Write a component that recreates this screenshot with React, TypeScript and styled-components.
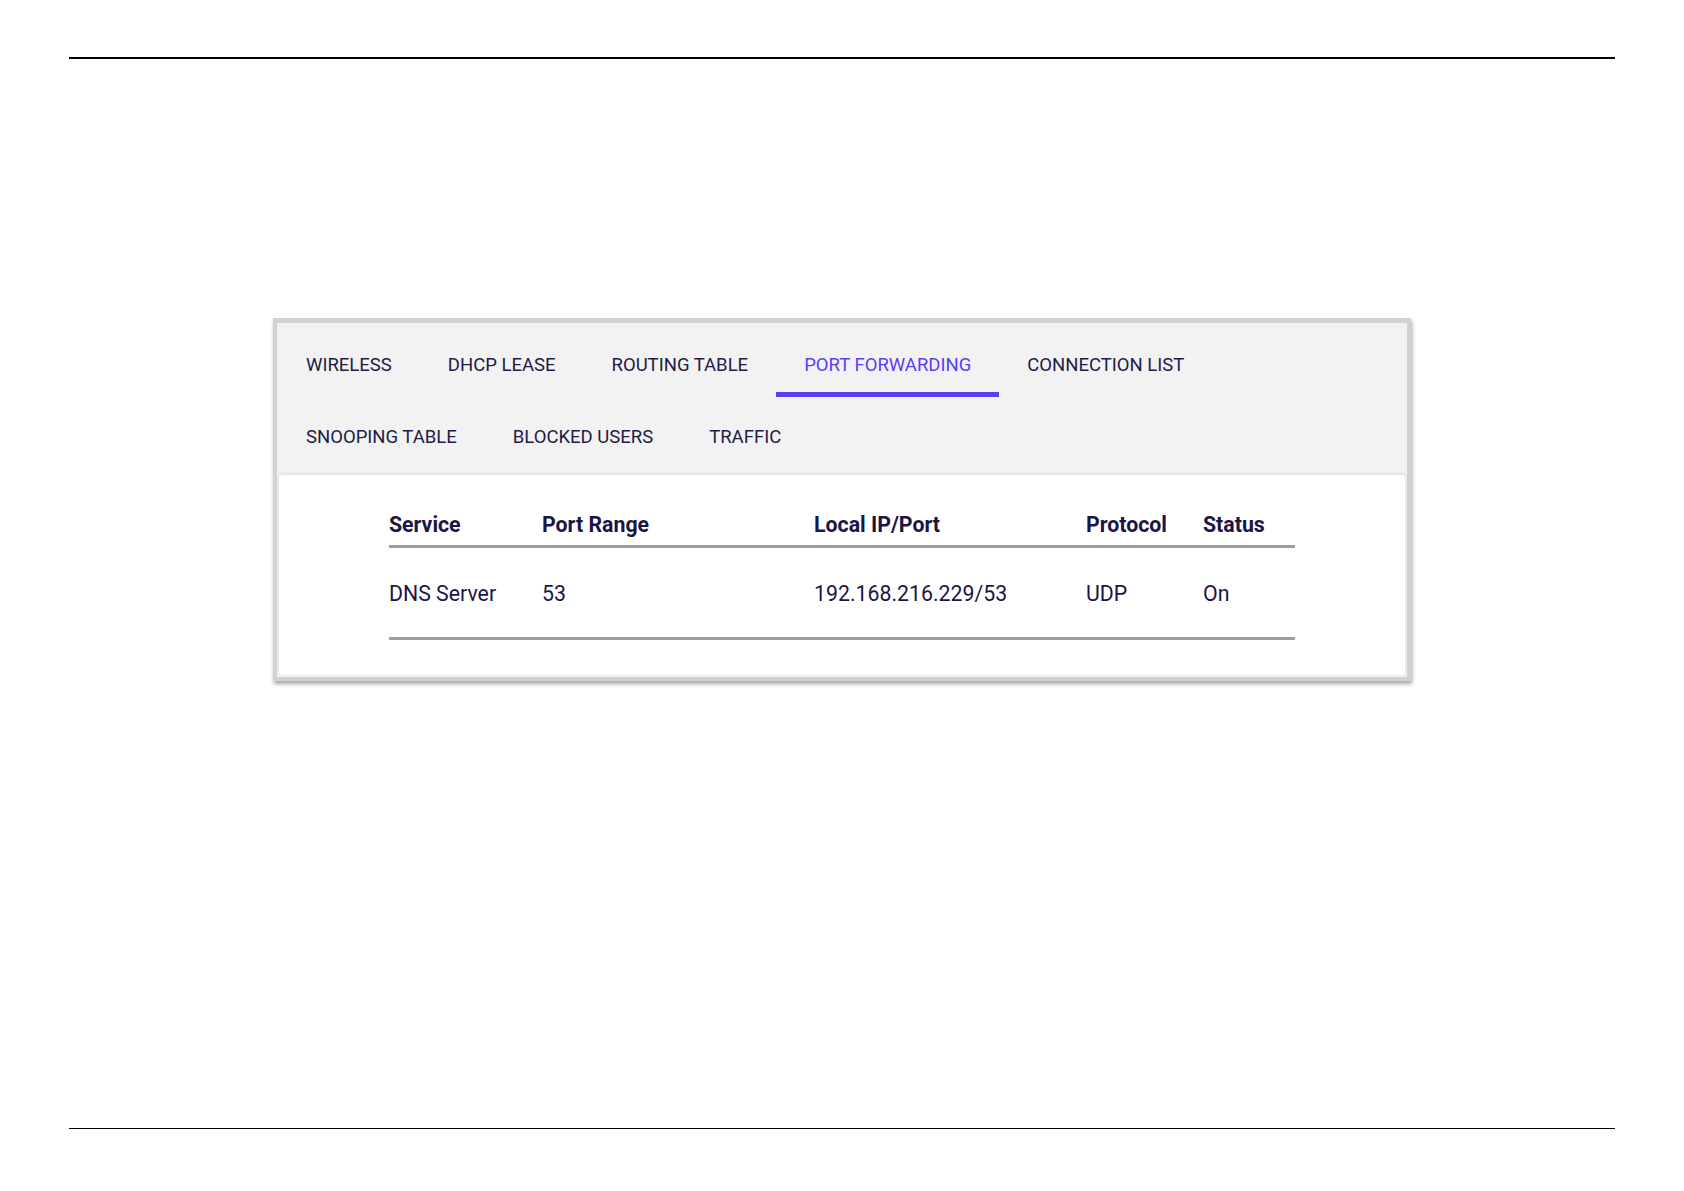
import React from "react";
import styled, { createGlobalStyle } from "styled-components";

const GlobalStyle = createGlobalStyle`
  html, body {
    margin: 0;
    padding: 0;
    background: #ffffff;
  }
  body {
    font-family: Roboto, "Noto Sans", "Liberation Sans", sans-serif;
  }
`;

const Page = styled.div`
  box-sizing: border-box;
  width: 1684px;
  height: 1191px;
  padding: 0 69px;
  display: flex;
  flex-direction: column;
`;

const Rule = styled.div<{ $top?: number; $bottom?: number }>`
  height: 1.5px;
  background: #000000;
  margin-top: ${(p) => p.$top ?? 0}px;
  margin-bottom: ${(p) => p.$bottom ?? 0}px;
`;

const Spacer = styled.div`
  flex: 1;
`;

const Panel = styled.div`
  box-sizing: border-box;
  width: 1138px;
  margin: 259px auto 0;
  border: 4px solid #d2d2d2;
  border-top-width: 5px;
  background: #f2f2f2;
  box-shadow: 1px 3px 4px rgba(0, 0, 0, 0.35);
  display: flex;
  flex-direction: column;
`;

const TabList = styled.div`
  display: flex;
  flex-wrap: wrap;
  padding: 2px 0 0 1px;
`;

const Tab = styled.div<{ $active?: boolean }>`
  box-sizing: border-box;
  height: 72px;
  padding: 13px 28px 0;
  display: flex;
  align-items: center;
  font-size: 18.5px;
  letter-spacing: 0;
  text-transform: uppercase;
  white-space: nowrap;
  color: ${(p) => (p.$active ? "#5b3ef2" : "#221b44")};
  border-bottom: 5px solid ${(p) => (p.$active ? "#5b3ef2" : "transparent")};
`;

const Card = styled.div`
  margin: 6px 2px 2px;
  background: #ffffff;
  border-radius: 3px;
  box-shadow: 0 -1px 4px rgba(0, 0, 0, 0.1);
  padding: 38px 0 35px;
  display: flex;
  justify-content: center;
`;

const Table = styled.table`
  width: 906px;
  table-layout: fixed;
  border-collapse: collapse;
  color: #1b1546;
  font-size: 21.3px;
`;

const Th = styled.th<{ $w: number }>`
  width: ${(p) => p.$w}px;
  text-align: left;
  font-weight: 700;
  line-height: 24px;
  padding: 0 0 8px;
  border-bottom: 3px solid #9e9e9e;
`;

const Td = styled.td`
  text-align: left;
  font-weight: 400;
  line-height: 24px;
  padding: 34px 0 31px;
  border-bottom: 3px solid #9e9e9e;
`;

const tabs = [
  "Wireless",
  "DHCP Lease",
  "Routing Table",
  "Port Forwarding",
  "Connection List",
  "Snooping Table",
  "Blocked Users",
  "Traffic",
];

const columns: [string, number][] = [
  ["Service", 153],
  ["Port Range", 272],
  ["Local IP/Port", 272],
  ["Protocol", 117],
  ["Status", 92],
];

const rows = [["DNS Server", "53", "192.168.216.229/53", "UDP", "On"]];

export default function App() {
  return (
    <>
      <GlobalStyle />
      <Page>
        <Rule $top={57} />
        <Panel>
          <TabList>
            {tabs.map((t) => (
              <Tab key={t} $active={t === "Port Forwarding"}>
                {t}
              </Tab>
            ))}
          </TabList>
          <Card>
            <Table>
              <thead>
                <tr>
                  {columns.map(([c, w]) => (
                    <Th key={c} $w={w}>
                      {c}
                    </Th>
                  ))}
                </tr>
              </thead>
              <tbody>
                {rows.map((r) => (
                  <tr key={r[0]}>
                    {r.map((v, i) => (
                      <Td key={i}>{v}</Td>
                    ))}
                  </tr>
                ))}
              </tbody>
            </Table>
          </Card>
        </Panel>
        <Spacer />
        <Rule $bottom={62} />
      </Page>
    </>
  );
}
